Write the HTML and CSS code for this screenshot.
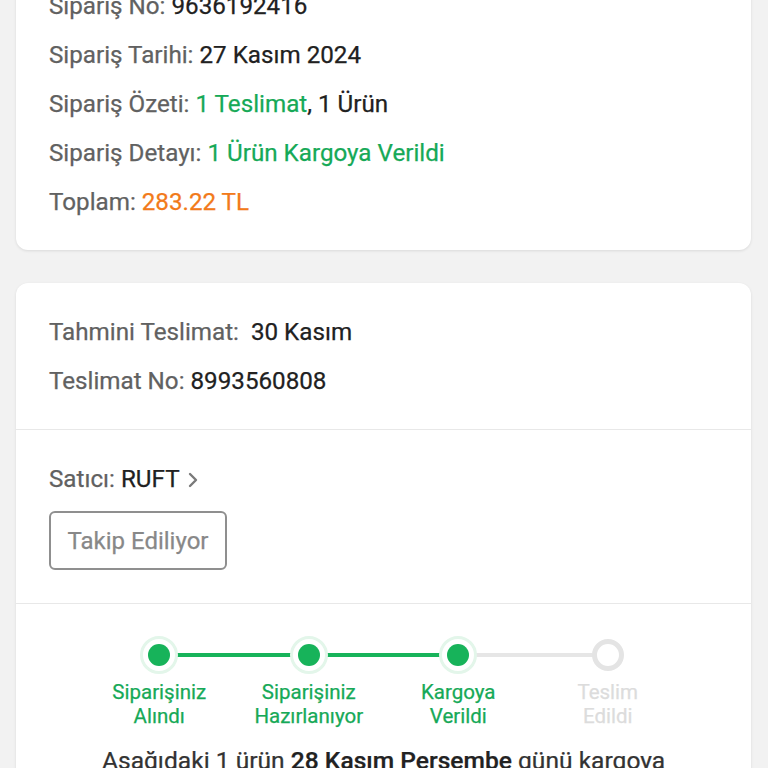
FILE: index.html
```html
<!DOCTYPE html>
<html lang="tr">
<head>
<meta charset="utf-8">
<link rel="stylesheet" href="styles.css">
</head>
<body>
<div class="page">
  <section class="card card-summary">
    <div class="row"><span class="lbl">Sipariş No:</span> <span class="val">9636192416</span></div>
    <div class="row"><span class="lbl">Sipariş Tarihi:</span> <span class="val">27 Kasım 2024</span></div>
    <div class="row"><span class="lbl">Sipariş Özeti:</span> <span class="green">1 Teslimat</span><span class="val">, 1 Ürün</span></div>
    <div class="row"><span class="lbl">Sipariş Detayı:</span> <span class="green">1 Ürün Kargoya Verildi</span></div>
    <div class="row"><span class="lbl">Toplam:</span> <span class="orange">283.22 TL</span></div>
  </section>

  <section class="card card-delivery">
    <div class="sec sec-info">
      <div class="row"><span class="lbl">Tahmini Teslimat:</span>&nbsp; <span class="val">30 Kasım</span></div>
      <div class="row"><span class="lbl">Teslimat No:</span> <span class="val">8993560808</span></div>
    </div>
    <div class="sec sec-seller">
      <div class="row seller"><span class="lbl">Satıcı:</span>&nbsp;<span class="val">RUFT</span>
        <svg class="chev" width="14" height="20" viewBox="0 0 14 20"><path d="M4 4 L10 10 L4 16" fill="none" stroke="#7a7a7a" stroke-width="2.4" stroke-linecap="round" stroke-linejoin="round"/></svg>
      </div>
      <div class="btn">Takip Ediliyor</div>
    </div>
    <div class="sec sec-track">
      <div class="stepper">
        <div class="step done line-done"><div class="dot"></div><div class="slabel">Siparişiniz<br>Alındı</div></div>
        <div class="step done line-done"><div class="dot"></div><div class="slabel">Siparişiniz<br>Hazırlanıyor</div></div>
        <div class="step done line-todo"><div class="dot"></div><div class="slabel">Kargoya<br>Verildi</div></div>
        <div class="step todo"><div class="dot"></div><div class="slabel">Teslim<br>Edildi</div></div>
      </div>
      <p class="note">Aşağıdaki 1 ürün <b>28 Kasım Perşembe</b> günü kargoya<br>verildi.</p>
    </div>
  </section>
</div>
</body>
</html>
```

FILE: styles.css
```css
* { box-sizing: border-box; }
html, body { margin: 0; padding: 0; }
body {
  background: #f2f2f2;
  font-family: Roboto, "Noto Sans", "Liberation Sans", sans-serif;
  font-size: 24.2px;
  color: #222;
  overflow: hidden;
  height: 768px;
  -webkit-text-stroke: 0.25px currentColor;
}
.page {
  margin-top: -40px;
  padding: 0 17px 0 16px;
  display: flex;
  flex-direction: column;
  gap: 33px;
}
.card {
  background: #fff;
  border-radius: 12px;
  box-shadow: 0 1px 3px rgba(0,0,0,0.10);
}
.card-summary {
  padding: 22px 33px 23px;
}
.row {
  line-height: 49px;
  height: 49px;
  white-space: nowrap;
}
.lbl { color: #616161; }
.val { color: #212121; }
.green { color: #16a957; }
.orange { color: #f27a1a; }

.sec { padding: 0 33px; }
.sec + .sec { border-top: 1px solid #e8e8e8; }
.sec-info { padding-top: 25px; padding-bottom: 23px; }
.sec-seller { padding-top: 25px; padding-bottom: 33px; }
.seller { display: flex; align-items: center; }
.chev { margin-left: 6px; margin-top: 1px; }
.btn {
  margin-top: 7px;
  width: 178px;
  height: 59px;
  border: 2px solid #8f8f8f;
  border-radius: 6px;
  color: #888;
  display: flex;
  align-items: center;
  justify-content: center;
  font-size: 24px;
}
.sec-track { padding-top: 32px; padding-bottom: 0; }
.stepper {
  width: 598px;
  margin: 0 auto;
  display: grid;
  grid-template-columns: repeat(4, 1fr);
}
.step {
  position: relative;
  display: flex;
  flex-direction: column;
  align-items: center;
}
.step::after {
  content: "";
  position: absolute;
  top: 17px;
  left: 50%;
  width: 100%;
  height: 4px;
  z-index: 0;
}
.line-done::after { background: #17b35a; }
.line-todo::after { background: #e6e6e6; }
.todo::after { display: none; }
.dot {
  position: relative;
  z-index: 1;
  width: 38px;
  height: 38px;
  border-radius: 50%;
  background: #fff;
  border: 3px solid #e3f6ea;
  display: flex;
  align-items: center;
  justify-content: center;
}
.done .dot::before {
  content: "";
  width: 22px;
  height: 22px;
  border-radius: 50%;
  background: #17b35a;
}
.todo .dot {
  width: 32px;
  height: 32px;
  margin-top: 3px;
  margin-bottom: 3px;
  border: 5px solid #e4e4e4;
}
.slabel {
  margin-top: 6px;
  font-size: 20.5px;
  line-height: 24px;
  text-align: center;
  color: #16a957;
}
.todo .slabel { color: #dcdcdc; }
.note {
  margin: 18px 0 0;
  text-align: center;
  font-size: 24.6px;
  line-height: 30px;
  color: #333;
  white-space: nowrap;
}
.note b { font-weight: 500; color: #222; }
```
